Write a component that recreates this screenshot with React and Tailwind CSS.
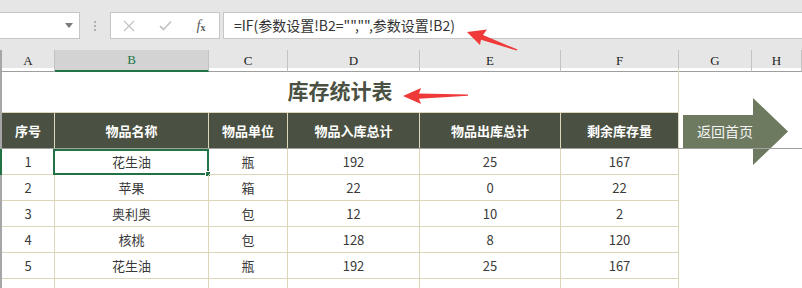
import React from 'react';

const cols = 'grid grid-cols-[53px_154px_79px_132px_141px_118px_73px_50px]';
const letters = ['A', 'B', 'C', 'D', 'E', 'F', 'G', 'H'];
const heads = ['序号', '物品名称', '物品单位', '物品入库总计', '物品出库总计', '剩余库存量'];
const rows = [
  ['1', '花生油', '瓶', '192', '25', '167'],
  ['2', '苹果', '箱', '22', '0', '22'],
  ['3', '奥利奥', '包', '12', '10', '2'],
  ['4', '核桃', '包', '128', '8', '120'],
  ['5', '花生油', '瓶', '192', '25', '167'],
  ['', '', '', '', '', ''],
];

const Toolbar = () => (
  <div className="h-[50px] bg-[#e6e6e6] pt-[12px]">
    <div className="flex h-[27px]">
      {/* name box */}
      <div className="w-[80px] h-full bg-white border border-l-0 border-[#c6c6c6] flex items-center justify-end pr-[6px]">
        <div className="w-0 h-0 border-l-[4px] border-r-[4px] border-t-[5px] border-l-transparent border-r-transparent border-t-[#7a7a7a]" />
      </div>
      <div className="w-[30px] flex flex-col items-center justify-center gap-[2px]">
        <div className="w-[2px] h-[2px] bg-[#b0b0b0]" />
        <div className="w-[2px] h-[2px] bg-[#b0b0b0]" />
        <div className="w-[2px] h-[2px] bg-[#b0b0b0]" />
      </div>
      {/* cancel / enter / fx */}
      <div className="w-[110px] h-full bg-white border border-[#c6c6c6] flex">
        <div className="w-[36px] flex items-center justify-center">
          <svg width="12" height="12" viewBox="0 0 12 12">
            <path d="M1 1 L11 11 M11 1 L1 11" stroke="#c4c4c4" strokeWidth="1.3" fill="none" />
          </svg>
        </div>
        <div className="w-[36px] flex items-center justify-center">
          <svg width="13" height="11" viewBox="0 0 13 11">
            <path d="M1 6 L4.5 9.5 L12 1.5" stroke="#c4c4c4" strokeWidth="1.8" fill="none" />
          </svg>
        </div>
        <div className="w-[36px] flex items-center justify-center text-[#5e5e5e] italic font-['Liberation_Serif',serif] text-[15px] leading-none">
          f<span className="text-[10px] not-italic font-bold mt-[4px]">x</span>
        </div>
      </div>
      <div className="flex-1 ml-[3px] h-full bg-white border border-r-0 border-[#c6c6c6] flex items-center pl-[10px] text-[14px] text-[#333] font-['Noto_Sans_CJK_SC',sans-serif]">
        =IF(参数设置!B2="","",参数设置!B2)
      </div>
    </div>
  </div>
);

export default function App() {
  return (
    <div className="relative w-[802px] h-[288px] overflow-hidden bg-white font-['Noto_Sans_CJK_SC',sans-serif]">
      <Toolbar />

      {/* column letters */}
      <div className={`${cols} h-[18px] bg-[#e6e6e6] border-l-2 border-l-[#a6a6a6]`}>
        {letters.map((l) => (
          <div
            key={l}
            className={`flex items-center justify-center text-[13px] font-['Liberation_Serif',serif] border-r border-r-[#c2c2c2] ${
              l === 'B'
                ? 'bg-[#d3d3d3] text-[#217346] border-b-2 border-b-[#217346]'
                : 'text-[#222] border-b border-b-[#9e9e9e]'
            }`}
          >
            {l}
          </div>
        ))}
      </div>

      {/* title */}
      <div className={`${cols} h-[45px] border-l-2 border-l-[#a6a6a6]`}>
        <div className="col-span-6 flex items-center justify-center border-r border-b border-[#dcd7b8] text-[21px] font-bold text-[#4a5142] pt-[2px]">
          库存统计表
        </div>
        <div />
        <div />
      </div>

      {/* header row */}
      <div className={`${cols} h-[35px] border-l-2 border-l-[#a6a6a6]`}>
        {heads.map((h) => (
          <div key={h} className="bg-[#4a5142] border-r border-[#dcd7b8] flex items-center justify-center text-[13px] font-bold text-white">
            {h}
          </div>
        ))}
        <div />
        <div />
      </div>

      {/* freeze pane line */}
      <div className="relative z-20 h-px bg-[#a0a0a0]" />

      {rows.map((r, i) => (
        <div key={i} className={`${cols} h-[26px] border-l-2 ${i === 0 ? 'border-l-[#217346]' : 'border-l-[#a6a6a6]'}`}>
          {r.map((c, j) => (
            <div key={j} className="relative border-r border-b border-[#dcd7b8] flex items-center justify-center text-[13px] text-[#3a3a3a]">
              {c}
              {i === 0 && j === 1 && (
                <div className="absolute left-[-2px] top-0 right-[-1px] bottom-[-1px] border-2 border-[#217346]">
                  <div className="absolute right-[-4px] bottom-[-4px] w-[6px] h-[6px] bg-[#217346] border border-white" />
                </div>
              )}
            </div>
          ))}
          <div />
          <div />
        </div>
      ))}

      {/* 返回首页 shape */}
      <div className="absolute left-[683px] top-[98px] w-[106px] h-[68px] z-10">
        <svg width="106" height="68" viewBox="0 0 106 68" className="absolute inset-0">
          <polygon points="0,17 70,17 70,0 105,33.5 70,67 70,50 0,50" fill="#6e7a60" />
        </svg>
        <span className="absolute left-[14px] top-[24px] text-[14px] leading-[18px] text-[#f4f4f4]">返回首页</span>
      </div>

      {/* red callout arrows */}
      <svg className="absolute inset-0 z-30 pointer-events-none" width="802" height="288" viewBox="0 0 802 288">
        <polygon points="467,32 487,29.5 483,35 517.5,49.6 516.8,50.6 481,39.8 480,45" fill="#f03a3a" />
        <polygon points="403,96 421,88 419,93.5 468,94.5 468,95.8 419,98.8 421,104" fill="#f03a3a" />
      </svg>
    </div>
  );
}
